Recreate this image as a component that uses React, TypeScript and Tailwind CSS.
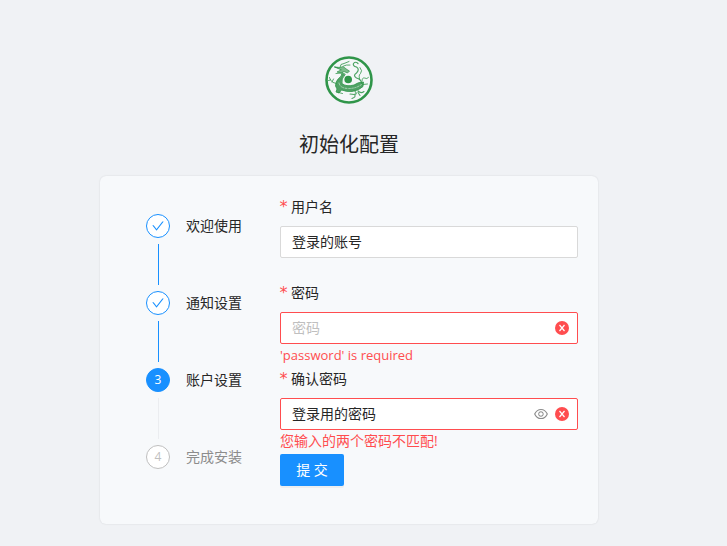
import clsx from 'clsx';
import React, { useState } from 'react';
import { AiOutlineCheck, AiOutlineEye } from 'react-icons/ai';

const STEPS = ['欢迎使用', '通知设置', '账户设置', '完成安装'];
const CURRENT_STEP = 2;

const Logo: React.FC = () => (
  <svg viewBox="0 0 48 48" className="w-12 h-12" fill="none" stroke="#2f9549" strokeLinecap="round" strokeLinejoin="round">
    <circle cx="24" cy="24" r="22.5" fill="#f4f7f8" strokeWidth="2.6" />
    {/* Pearl */}
    <circle cx="23.2" cy="23.5" r="3.8" fill="#2f9549" stroke="none" />
    {/* Head, horns and whiskers */}
    <path d="M10 11 L15 11.500 L18 10.500 L22 13.500 L24.500 15 L22.500 17 L19 15.500 L16 17 L12 16 L16 14 Z" fill="#7dbb8c" strokeWidth="0.7" />
    <path d="M15 11 Q15 7.500 19 7.500 L24 5.500 M18.500 10 Q21 8.500 25 9 M9.500 11 L13 12 M11 17.500 L16 17" strokeWidth="1" opacity="0.8" />
    {/* Body */}
    <path d="M17 17 Q17 20.500 13.500 22.500 Q10.500 25.500 10.500 30 L12 33 L11 36 L14 37 L16.500 34 Q22 36 27 35.500 Q34 34.500 38 30.500 L38.500 26 Q33 26 29 29 Q21 31 17 27.500 Q16 23 20 18.500 Z" fill="#4fa265" strokeWidth="0.8" />
    <path d="M14 27 Q15 32.500 24 32.500 Q31 32.500 36.500 28.500" stroke="#b4dabd" strokeWidth="0.9" strokeDasharray="1.5 1.5" />
    <path d="M13.500 36.500 L17.500 37.500" strokeWidth="1" opacity="0.8" />
    {/* Left foreleg */}
    <path d="M11 27.500 Q7.500 27 5.500 24 L4.500 21.500 M5.500 24 L3.500 24.500 M7 26 L8.500 23" strokeWidth="1" opacity="0.8" />
    {/* Tail */}
    <path d="M37 28 Q36 23 31.500 22 Q27.500 19.500 31.500 17 Q35 13.500 31.500 11 Q27.500 10 28.500 7.500 Q30.500 5 33 7.500" strokeWidth="1.2" opacity="0.85" />
    <path d="M35 24 Q33 19.500 35.500 17.500 Q38 15 35 11.500 M37 25 Q37 21.500 39.500 22 Q42 23.500 43.500 21.500 M38 28.500 L42.500 28" strokeWidth="1" opacity="0.8" />
    {/* Hind claws */}
    <path d="M30 35.500 Q33 38 29 38.500 L25 38 M29.500 38.500 Q31.500 41 27 42.500 M33 35 Q36 38 39 35.500 M33 36.500 L35 39.500" strokeWidth="1.1" opacity="0.85" />
  </svg>
);

const ErrorIcon: React.FC = () => (
  <svg viewBox="0 0 14 14" className="shrink-0 w-3.5 h-3.5">
    <circle cx="7" cy="7" r="7" fill="#ff4d4f" />
    <path d="M4.500 4 L9.500 10 M9.500 4 L4.500 10" stroke="#fff" strokeWidth="1.200" />
  </svg>
);

const Steps: React.FC = () => (
  <ol className="shrink-0 pt-[18px]">
    {STEPS.map((title, index) => {
      const isDone = index < CURRENT_STEP;
      const isCurrent = index === CURRENT_STEP;

      return (
        <li key={title}>
          <div className="flex items-center gap-4">
            <span
              className={clsx(
                'flex items-center justify-center w-6 h-6 rounded-full border text-xs',
                isDone && 'bg-white border-[#1890ff] text-[#1890ff]',
                isCurrent && 'bg-[#1890ff] border-[#1890ff] text-white',
                !isDone && !isCurrent && 'bg-white border-[#bfbfbf] text-[#bfbfbf]'
              )}
            >
              {isDone ? <AiOutlineCheck className="w-3.5 h-3.5" /> : index + 1}
            </span>
            <span className={clsx('leading-6', index <= CURRENT_STEP ? 'text-[#262626]' : 'text-[#8c8c8c]')}>{title}</span>
          </div>
          {index < STEPS.length - 1 && (
            <div className={clsx('w-px h-[41px] my-1.5 ml-3', isDone ? 'bg-[#1890ff]' : 'bg-[#ebedf0]')} />
          )}
        </li>
      );
    })}
  </ol>
);

interface FieldProps {
  id: string;
  label: string;
  value: string;
  onChange: (value: string) => void;
  placeholder?: string;
  error?: React.ReactNode;
  canReveal?: boolean;
}

const Field: React.FC<FieldProps> = ({ id, label, value, onChange, placeholder, error, canReveal }) => (
  <div>
    <label htmlFor={id} className="flex items-center gap-1 mb-2 leading-[22px]">
      <span className="flex justify-center w-[7px] text-base leading-[22px] font-['DejaVu_Sans_Mono',monospace] text-[#ff4d4f]">*</span>
      {label}
    </label>
    <div
      className={clsx(
        'flex items-center gap-1.5 h-8 px-[11px] bg-white border rounded-xs',
        error ? 'border-[#ff4d4f] pr-2' : 'border-[#d9d9d9]'
      )}
    >
      <input
        id={id}
        value={value}
        placeholder={placeholder}
        onChange={(e) => onChange(e.target.value)}
        className="flex-1 min-w-0 outline-none placeholder:text-[#bfbfbf]"
      />
      {canReveal && (
        <button type="button" aria-label={label}>
          <AiOutlineEye className="w-4 h-4 text-[#8c8c8c]" />
        </button>
      )}
      {error && <ErrorIcon />}
    </div>
    <p className="h-6 leading-[22px] text-[#ff4d4f]">{error}</p>
  </div>
);

export default function App() {
  const [username, setUsername] = useState('登录的账号');
  const [password, setPassword] = useState('');
  const [confirm, setConfirm] = useState('登录用的密码');

  return (
    <main className="min-h-screen pt-14 pl-[100px] pr-[129px] pb-5 bg-[#f0f2f5] font-['Open_Sans','Noto_Sans_CJK_SC',sans-serif] text-sm text-[#262626]">
      <header className="flex flex-col items-center">
        <Logo />
        <h1 className="mt-6 mb-3.5 text-xl leading-[34px]">初始化配置</h1>
      </header>

      <section className="flex gap-[38px] pt-5 pr-5 pb-[38px] pl-[46px] bg-[#f7f9fb] rounded-md shadow-[0_0_2px_rgba(0,0,0,0.12)]">
        <Steps />
        <form className="flex-1 min-w-0" onSubmit={(e) => e.preventDefault()}>
          <Field id="username" label="用户名" value={username} onChange={setUsername} />
          <Field
            id="password"
            label="密码"
            placeholder="密码"
            value={password}
            onChange={setPassword}
            error={<span className="text-[13px]">'password' is required</span>}
          />
          <Field
            id="confirm"
            label="确认密码"
            value={confirm}
            onChange={setConfirm}
            error="您输入的两个密码不匹配!"
            canReveal
          />
          <button
            type="submit"
            className="flex items-center justify-center w-16 h-8 bg-[#1890ff] rounded-xs text-white shadow-[0_2px_0_rgba(0,0,0,0.045)]"
          >
            提 交
          </button>
        </form>
      </section>
    </main>
  );
}
